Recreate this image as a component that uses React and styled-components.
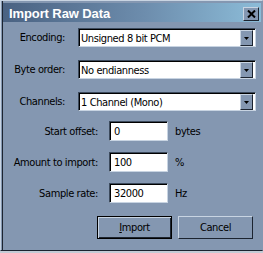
import React from 'react';
import styled, { createGlobalStyle } from 'styled-components';

const Global = createGlobalStyle`
  html, body { margin: 0; padding: 0; background: #c4ccd6; }
  body {
    font-family: "DejaVu Sans Condensed", "DejaVu Sans", "Liberation Sans", sans-serif;
    font-stretch: condensed;
  }
`;

const BG = '#8497b1';
const LIGHT = '#c8d4e2';
const DARK = '#1c2430';

const Window = styled.div`
  box-sizing: border-box;
  width: 263px;
  height: 251px;
  background: ${BG};
  border-top: 1px solid ${LIGHT};
  border-left: 1px solid ${LIGHT};
  border-bottom: 1px solid ${DARK};
  border-right: 1px solid ${BG};
  box-shadow: inset 1px 0 0 ${BG}, inset 2px 0 0 ${DARK};
  padding: 2px 1px 0 2px;
  display: flex;
  flex-direction: column;
`;

const TitleBar = styled.div`
  height: 19px;
  display: flex;
  align-items: center;
  justify-content: space-between;
  padding: 0 2px 0 6px;
  background: linear-gradient(to right, #4a6282, #6d8dad 55%, #8cbcd8);
`;

const Title = styled.span`
  font-family: "Liberation Sans", Arial, sans-serif;
  font-stretch: normal;
  color: #fff;
  font-weight: bold;
  font-size: 13px;
  letter-spacing: -0.1px;
  padding-top: 1px;
`;

const CloseButton = styled.div`
  box-sizing: border-box;
  width: 16px;
  height: 14px;
  margin-top: 2px;
  background: ${BG};
  border-top: 1px solid ${LIGHT};
  border-left: 1px solid ${LIGHT};
  border-right: 1px solid ${DARK};
  border-bottom: 1px solid ${DARK};
  display: flex;
  align-items: center;
  justify-content: center;
`;

const Body = styled.div`
  padding: 6px 4px 0 0;
  display: flex;
  flex-direction: column;
`;

const ComboRow = styled.div`
  display: grid;
  grid-template-columns: 62px 178px;
  column-gap: 13px;
  align-items: center;
  height: 19px;
  margin-bottom: 13px;
`;

const FieldRow = styled.div`
  display: grid;
  grid-template-columns: 95px 59px auto;
  column-gap: 11px;
  align-items: center;
  height: 20px;
  margin-top: ${p => p.$top}px;
`;

const Text = `
  font-size: 11px;
  letter-spacing: -0.4px;
  color: #000;
  white-space: nowrap;
`;

const Label = styled.label`
  ${Text}
  text-align: right;
`;

const Unit = styled.span`
  ${Text}
  margin-left: -4px;
`;

const Combo = styled.div`
  box-sizing: border-box;
  height: 19px;
  background: #fff;
  border-top: 1px solid #3c4a5c;
  border-left: 1px solid #3c4a5c;
  border-right: 1px solid ${LIGHT};
  border-bottom: 1px solid ${LIGHT};
  box-shadow: inset 1px 1px 0 #000;
  display: flex;
  align-items: center;
  justify-content: space-between;
  padding: 1px 2px 0 1px;
`;

const ComboText = styled.span`
  ${Text}
  padding-left: 1px;
`;

const DropButton = styled.div`
  box-sizing: border-box;
  width: 13px;
  height: 16px;
  background: ${BG};
  border-top: 1px solid ${LIGHT};
  border-left: 1px solid ${LIGHT};
  border-right: 1px solid ${DARK};
  border-bottom: 1px solid ${DARK};
  display: flex;
  align-items: center;
  justify-content: center;
`;

const Input = styled.div`
  box-sizing: border-box;
  height: 20px;
  background: #fff;
  border-top: 1px solid #3c4a5c;
  border-left: 1px solid #3c4a5c;
  border-right: 1px solid ${LIGHT};
  border-bottom: 1px solid ${LIGHT};
  box-shadow: inset 1px 1px 0 #000;
  display: flex;
  align-items: center;
  padding: 1px 0 0 4px;
  ${Text}
`;

const ButtonRow = styled.div`
  display: flex;
  justify-content: flex-end;
  gap: 6px;
  margin-top: 13px;
  padding-right: 4px;
`;

const Button = styled.div`
  box-sizing: border-box;
  width: 75px;
  height: 23px;
  background: ${BG};
  display: flex;
  align-items: center;
  justify-content: center;
  ${Text}
  border: 1px solid ${p => (p.$default ? '#000' : LIGHT)};
  ${p =>
    p.$default
      ? `box-shadow: inset 1px 1px 0 ${LIGHT}, inset -1px -1px 0 ${DARK};`
      : `border-right-color: ${DARK}; border-bottom-color: ${DARK};`}
`;

const Mnemonic = styled.span`
  text-decoration: underline;
`;

const Arrow = () => (
  <svg width="5" height="3" viewBox="0 0 5 3">
    <path d="M0 0h5L2.5 3z" fill="#000" />
  </svg>
);

const XIcon = () => (
  <svg width="9" height="8" viewBox="0 0 9 8">
    <path d="M1 0.5l7 7M8 0.5l-7 7" stroke="#000" strokeWidth="2" />
  </svg>
);

const combos = [
  ['Encoding:', 'Unsigned 8 bit PCM'],
  ['Byte order:', 'No endianness'],
  ['Channels:', '1 Channel (Mono)'],
];

const fields = [
  ['Start offset:', '0', 'bytes', -3],
  ['Amount to import:', '100', '%', 11],
  ['Sample rate:', '32000', 'Hz', 11],
];

export default function App() {
  return (
    <>
      <Global />
      <Window>
        <TitleBar>
          <Title>Import Raw Data</Title>
          <CloseButton>
            <XIcon />
          </CloseButton>
        </TitleBar>
        <Body>
          {combos.map(([label, value]) => (
            <ComboRow key={label}>
              <Label>{label}</Label>
              <Combo>
                <ComboText>{value}</ComboText>
                <DropButton>
                  <Arrow />
                </DropButton>
              </Combo>
            </ComboRow>
          ))}
          {fields.map(([label, value, unit, top]) => (
            <FieldRow key={label} $top={top}>
              <Label>{label}</Label>
              <Input>{value}</Input>
              <Unit>{unit}</Unit>
            </FieldRow>
          ))}
          <ButtonRow>
            <Button $default>
              <span>
                <Mnemonic>I</Mnemonic>mport
              </span>
            </Button>
            <Button>Cancel</Button>
          </ButtonRow>
        </Body>
      </Window>
    </>
  );
}
